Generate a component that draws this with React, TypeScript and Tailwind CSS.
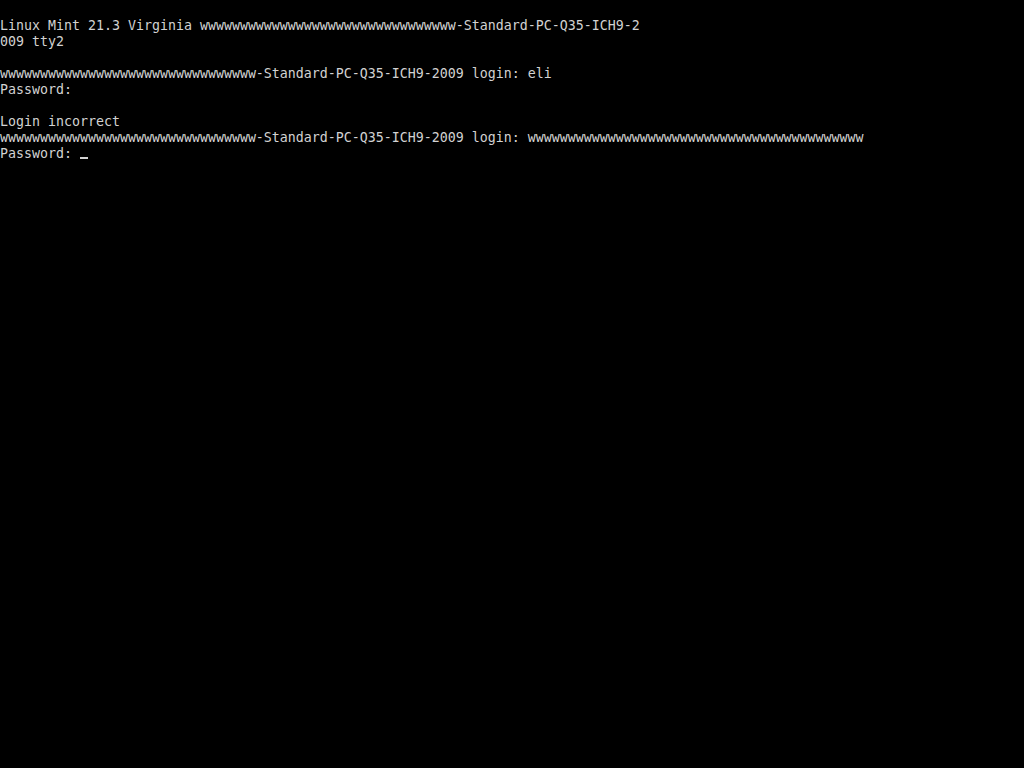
import React from 'react';

const host = 'w'.repeat(32) + '-Standard-PC-Q35-ICH9-2009';
const typed = 'w'.repeat(42);

const Row: React.FC<{ children?: React.ReactNode }> = ({ children }) => (
  <div className="h-[16px] whitespace-pre">{children}</div>
);

const App: React.FC = () => {
  const issue = 'Linux Mint 21.3 Virginia ' + host + ' tty2';
  return (
    <div
      className="w-[1024px] h-[768px] bg-black text-[#d2d2d2] text-[13.29px] leading-[16px] pt-[2px] overflow-hidden"
      style={{ fontFamily: '"DejaVu Sans Mono", "Liberation Mono", monospace' }}
    >
      <Row />
      <Row>{issue.slice(0, 80)}</Row>
      <Row>{issue.slice(80)}</Row>
      <Row />
      <Row>{host} login: eli</Row>
      <Row>Password:</Row>
      <Row />
      <Row>Login incorrect</Row>
      <Row>{host} login: {typed}</Row>
      <Row>
        Password:{' '}
        <span className="inline-block w-[8px] h-[16px] align-top">
          <span className="block mt-[11px] h-[2px] w-[8px] bg-[#d2d2d2]"></span>
        </span>
      </Row>
    </div>
  );
};

export default App;
